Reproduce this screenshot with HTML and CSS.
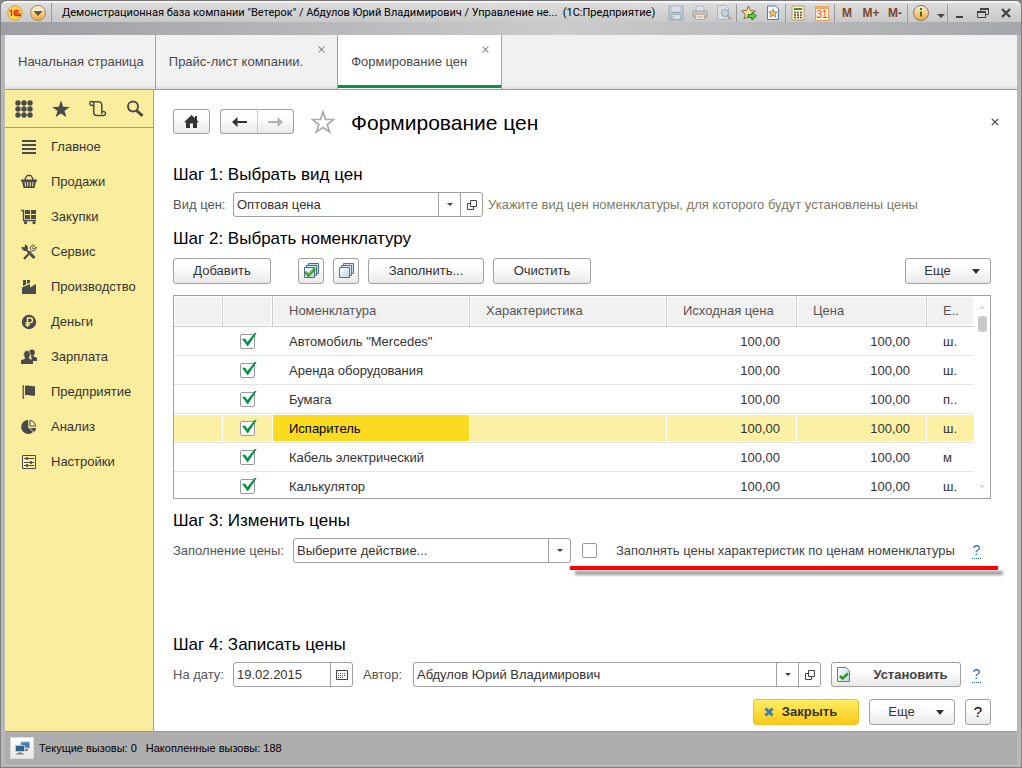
FILE: index.html
```html
<!DOCTYPE html>
<html lang="ru">
<head>
<meta charset="utf-8">
<title>Формирование цен</title>
<link rel="stylesheet" href="styles.css">
</head>
<body>
<svg class="defs" width="0" height="0" aria-hidden="true">
  <defs>
    <linearGradient id="gold" x1="0" y1="0" x2="0" y2="1"><stop offset="0" stop-color="#fff6d8"/><stop offset="1" stop-color="#f0a53a"/></linearGradient>
    <linearGradient id="sheet" x1="0" y1="0" x2="1" y2="1"><stop offset="0" stop-color="#fff"/><stop offset="1" stop-color="#bcd3e4"/></linearGradient>
    <symbol id="arrow-down" viewBox="0 0 8 5"><path d="M0 0h8L4 5z" fill="#333"/></symbol>
    <symbol id="arrow-small" viewBox="0 0 6 3"><path d="M0 0h6L3 3z" fill="#444"/></symbol>
    <symbol id="open" viewBox="0 0 10 10"><path d="M3.500 .5h6v6h-6zM3 3.500H.5v6h6V7" fill="none" stroke="#444"/></symbol>
    <symbol id="cross" viewBox="0 0 8 8"><path d="M.8 .8l6.400 6.400M7.200 .8L.8 7.200" fill="none" stroke="currentColor" stroke-width="1.200"/></symbol>
  </defs>
</svg>
<div class="window">
  <header class="titlebar">
    <div class="title-row">
      <button class="tb-btn logo-btn" aria-label="1С"><svg width="16" height="16" viewBox="0 0 16 16"><circle cx="8" cy="8" r="7.300" fill="#fbd843" stroke="#d59a58"/><path d="M2.500 6.500L4.500 5.300V11M12 6.300C10.500 4.700 7 5 7 8c0 2 1.500 2.600 3 2.600h4M11 7.700c-1-1-2.400-.6-2.400.4 0 .8.600 1 1.400 1h4" fill="none" stroke="#e02518" stroke-width="1.300"/></svg></button>
      <button class="tb-btn menu-btn" aria-label="Меню"><svg width="18" height="18" viewBox="0 0 18 18"><circle cx="9" cy="9" r="7.500" fill="url(#gold)" stroke="#a88a68"/><path d="M4.500 7h9L9 12z" fill="#6b5138"/><path d="M4.500 6.500h9" stroke="#fff"/></svg></button>
      <h1 class="title">Демонстрационная база компании "Ветерок" / Абдулов Юрий Владимирович / Управление не... &nbsp;(1С:Предприятие)</h1>
      <div class="tb-group first">
        <button class="tb-btn faded" aria-label="Сохранить"><svg width="16" height="16" viewBox="0 0 16 16"><path d="M1 1h14v14H1z" fill="#a6c6de" stroke="#6488a2"/><path d="M4 1.500h8v5H4z" fill="#dde9f1"/><path d="M3.500 9.500h9v5h-9z" fill="#eef3f6" stroke="#7293aa"/><path d="M5 11v3M3.500 7.500h9" stroke="#5d8099"/></svg></button>
        <button class="tb-btn faded" aria-label="Печать"><svg width="16" height="16" viewBox="0 0 16 16"><path d="M4 1h7l1 1v5H4z" fill="#e8edf2" stroke="#8d9aa5"/><path d="M1 6h14v6H1z" fill="#aeb6bd" stroke="#6e777e"/><path d="M3.500 9.500h9v5h-9z" fill="#fff" stroke="#b88464"/><path d="M5 12h6" stroke="#c88859"/></svg></button>
        <button class="tb-btn faded" aria-label="Просмотр"><svg width="16" height="16" viewBox="0 0 16 16"><path d="M1.500 .5h8l3 3v11h-11z" fill="#dfeaf3" stroke="#83a3bd"/><circle cx="9" cy="8" r="3.500" fill="#bcd6ea" stroke="#54789a"/><path d="M11.500 10.500l4 4" stroke="#b07a58" stroke-width="2"/></svg></button>
      </div>
      <div class="tb-group">
        <button class="tb-btn" aria-label="В избранное"><svg width="16" height="16" viewBox="0 0 16 16"><path d="M7.500 1l2 4.600 5 .4-3.900 3.200 1.300 4.800-4.400-2.600L3 14l1.400-4.800L.5 6l5-.4z" fill="#fbe1a0" stroke="#7d6a47"/><path d="M7 9.500h4V7l4.500 4L11 15v-2.500H7z" fill="#6fc837" stroke="#267b1a"/></svg></button>
        <button class="tb-btn" aria-label="Избранное"><svg width="14" height="16" viewBox="0 0 14 16"><path d="M1.500 1h8l3 3v10.500h-11z" fill="#f5fafd" stroke="#557fa2"/><path d="M7 4l1.200 2.800 3 .2L9 9l.7 3L7 10.400 4.300 12 5 9 2.800 7l3-.2z" fill="#f6c46a" stroke="#8d6a3b" stroke-width=".7"/></svg></button>
      </div>
      <div class="tb-group">
        <button class="tb-btn" aria-label="Калькулятор"><svg width="14" height="16" viewBox="0 0 14 16"><path d="M1 1h12v14H1z" fill="#fff4cf" stroke="#b7a06b"/><path d="M3 3h8v2H3z" fill="#43903b"/><path d="M3 7.500h8M3 10h8M3 12.500h8" stroke="#5b4a3a" stroke-width="1.500" stroke-dasharray="2 1"/></svg></button>
        <button class="tb-btn" aria-label="Календарь"><span class="cal">31</span></button>
      </div>
      <div class="tb-group">
        <button class="tb-btn mem">M</button><button class="tb-btn mem">M+</button><button class="tb-btn mem">M-</button>
      </div>
      <div class="tb-group">
        <button class="tb-btn info-btn" aria-label="О программе"><svg width="18" height="18" viewBox="0 0 18 18"><circle cx="9" cy="9" r="7.500" fill="url(#gold)" stroke="#8b7960"/><path d="M8 7.500h2v5H8zM8 4h2v2H8z" fill="#466d24"/></svg></button>
        <button class="tb-btn more-btn" aria-label="Ещё"><svg width="8" height="12" viewBox="0 0 8 12"><path d="M0 7h8l-4 4z" fill="#444"/></svg></button>
      </div>
      <div class="tb-group win">
        <button class="tb-btn" aria-label="Свернуть"><svg width="12" height="12" viewBox="0 0 12 12"><path d="M2 9h7v2H2z" fill="#444"/></svg></button>
        <button class="tb-btn" aria-label="Развернуть"><svg width="12" height="12" viewBox="0 0 12 12"><path d="M3.500 4V1.500h8v6H9M.5 5h8v5.500h-8z" fill="none" stroke="#444"/><path d="M3 2h9M0 5h9" stroke="#444" stroke-width="2"/></svg></button>
        <button class="tb-btn" aria-label="Закрыть окно"><svg width="12" height="12" viewBox="0 0 12 12"><path d="M2 2l8 8M10 2l-8 8" stroke="#444" stroke-width="2.400"/></svg></button>
      </div>
    </div>
  </header>

  <nav class="tabs" aria-label="Открытые окна">
    <a class="tab" href="#home">Начальная страница</a>
    <div class="tab closable"><a href="#price">Прайс-лист компании.</a><button class="tab-close" aria-label="Закрыть вкладку"><svg width="7" height="7"><use href="#cross"/></svg></button></div>
    <div class="tab closable active"><a href="#form">Формирование цен</a><button class="tab-close" aria-label="Закрыть вкладку"><svg width="7" height="7"><use href="#cross"/></svg></button></div>
  </nav>

  <div class="body">
    <aside class="sidebar">
      <div class="side-tools">
        <button aria-label="Функции"><svg width="18" height="18" viewBox="0 0 18 18" fill="#4a4a4a"><circle cx="3" cy="3" r="2.700"/><circle cx="9" cy="3" r="2.700"/><circle cx="15" cy="3" r="2.700"/><circle cx="3" cy="9" r="2.700"/><circle cx="9" cy="9" r="2.700"/><circle cx="15" cy="9" r="2.700"/><circle cx="3" cy="15" r="2.700"/><circle cx="9" cy="15" r="2.700"/><circle cx="15" cy="15" r="2.700"/></svg></button>
        <button aria-label="Избранное"><svg width="18" height="18" viewBox="0 0 18 18"><path d="M9 .5l2.200 6.200 6.500.2-5.200 4 1.900 6.300L9 13.500l-5.400 3.700 1.900-6.300-5.200-4 6.500-.2z" fill="#4a4a4a"/></svg></button>
        <button aria-label="История"><svg width="18" height="18" viewBox="0 0 18 18" fill="none" stroke="#4a4a4a" stroke-width="1.500"><path d="M3.500 5.500H2.800a2 2 0 1 1 1.900-2.500v9.500a3 3 0 0 0 3 3h6.800a2 2 0 1 0-1.700-3V5a3 3 0 0 0-3-3.200H3M4.500 5.300H3"/></svg></button>
        <button aria-label="Поиск"><svg width="18" height="18" viewBox="0 0 18 18" fill="none" stroke="#4a4a4a"><circle cx="7" cy="6.500" r="5" stroke-width="1.900"/><path d="M10.500 10.500l6 5.300" stroke-width="3"/></svg></button>
      </div>
      <ul class="menu">
        <li><a href="#main"><svg viewBox="0 0 16 16"><path d="M1 2h14M1 6h14M1 10h14M1 14h14" stroke="#4a4a4a" stroke-width="1.800"/></svg>Главное</a></li>
        <li><a href="#sales"><svg viewBox="0 0 16 16"><path d="M3 7l3-5.500M13 7l-3-5.500M6 1.500h4" fill="none" stroke="#4a4a4a" stroke-width="1.400"/><path d="M0 5.500h16v2h-1L13.500 14h-11L1 7.500H0z" fill="#4a4a4a"/><path d="M4 8l.5 4.500M6.700 8v4.500M9.300 8v4.500M12 8l-.5 4.500" stroke="#fbed9e"/></svg>Продажи</a></li>
        <li><a href="#buy"><svg viewBox="0 0 16 16"><path d="M0 1.500h2.500v10H15" fill="none" stroke="#4a4a4a" stroke-width="1.400"/><path d="M4 1h5v4H4zM10 1h5v4h-5zM4 6h5v4H4zM10 6h5v4h-5z" fill="#4a4a4a"/><circle cx="4.500" cy="13.700" r="1.600" fill="#4a4a4a"/><circle cx="13" cy="13.700" r="1.600" fill="#4a4a4a"/></svg>Закупки</a></li>
        <li><a href="#service"><svg viewBox="0 0 16 16" fill="none" stroke="#4a4a4a"><path d="M3 15l7-7.500" stroke-width="2.200"/><path d="M13.500 1.500l-2 2 .3 1.200 1.300.2 2-2c.5 2-1 4-3 4-2.200 0-3.500-2.500-2.300-4.500.7-1 2-1.700 3.700-.9z"/><path d="M1 3l2 1 1.500-1.500L4 .9C6 1 7 3 6.300 5L5 6.500C3 7 1 5.500 1 3z" fill="#4a4a4a"/><path d="M5.500 6l3 3" stroke-width="2"/><path d="M9.500 10l4 4" stroke-width="3"/></svg>Сервис</a></li>
        <li><a href="#production"><svg viewBox="0 0 16 16"><path d="M1 15V8.500L9 5v3.500l6-3.500v10zM2 1h3v4.500L2 7zM6 1h3v2.500L6 5z" fill="#4a4a4a"/></svg>Производство</a></li>
        <li><a href="#money"><svg viewBox="0 0 16 16"><circle cx="8" cy="8" r="7.200" fill="#4a4a4a"/><path d="M6.500 13V4h2.700a2.300 2.300 0 0 1 0 4.700H4.500M4.500 10.800H9" fill="none" stroke="#fbed9e" stroke-width="1.400"/></svg>Деньги</a></li>
        <li><a href="#salary"><svg viewBox="0 0 16 16" fill="#4a4a4a"><circle cx="11" cy="3.500" r="2.900"/><path d="M10 7l2-1 1 1.500 3 1.500v3h-5z"/><ellipse cx="6" cy="5.500" rx="3.300" ry="4" stroke="#fbed9e" stroke-width=".6"/><path d="M0 15v-3.500l4-2V8h4v1.500l4 2V15z"/></svg>Зарплата</a></li>
        <li><a href="#company"><svg viewBox="0 0 16 16"><path d="M2.200 1v14" stroke="#4a4a4a" stroke-width="1.200"/><path d="M4 2c3-1.500 5 1 10 0v9.500c-5 1-7-1.500-10 0z" fill="#4a4a4a"/></svg>Предприятие</a></li>
        <li><a href="#analysis"><svg viewBox="0 0 16 16"><path d="M7.300 1a7 7 0 1 0 4.800 12L7.300 8.500z" fill="#4a4a4a"/><path d="M9 9h6c0 1.500-.7 3-2 4z" fill="#4a4a4a"/><path d="M9 1.500c3 0 5.500 2.500 5.500 5.500H9z" fill="none" stroke="#4a4a4a"/></svg>Анализ</a></li>
        <li><a href="#settings"><svg viewBox="0 0 16 16" fill="none" stroke="#4a4a4a"><path d="M1.500 1.500h13v13h-13zM3 4.500h10M3 8.500h10M3 11.500h10"/><path d="M6 3v3M10 7v3M6 10v3" stroke-width="1.600"/></svg>Настройки</a></li>
      </ul>
    </aside>

    <main class="main">
      <div class="page-head">
        <button class="btn home-btn" aria-label="Домой"><svg width="15" height="13" viewBox="0 0 15 13"><path d="M7.500 0L11 3.300V1h2v4.200l2 2h-2V13H9V8.500H6V13H2V7.200H0z" fill="#333"/></svg></button>
        <div class="history">
          <button class="btn" aria-label="Назад"><svg width="15" height="10" viewBox="0 0 15 10"><path d="M1 5h14" stroke="#333" stroke-width="2"/><path d="M0 5l5.500-5v10z" fill="#333"/></svg></button>
          <button class="btn" aria-label="Вперед" disabled><svg width="15" height="10" viewBox="0 0 15 10"><path d="M0 5h14" stroke="#b0b0b0" stroke-width="2"/><path d="M15 5L9.500 0v10z" fill="#b0b0b0"/></svg></button>
        </div>
        <button class="plain star" aria-label="Добавить в избранное"><svg width="24" height="24" viewBox="0 0 24 24"><path d="M12 2l2.500 7.300 8.200.2-6.500 5 2.400 7.500L12 17.500 5.400 22l2.400-7.500-6.500-5 8.200-.2z" fill="#fff" stroke="#aaa" stroke-width="1.700"/></svg></button>
        <h2 class="page-title">Формирование цен</h2>
        <button class="plain page-close" aria-label="Закрыть"><svg width="8" height="8"><use href="#cross"/></svg></button>
      </div>

      <section class="step">
        <h3>Шаг 1: Выбрать вид цен</h3>
        <div class="row">
          <label class="lbl short" for="kind">Вид цен:</label>
          <div class="combo kind">
            <select id="kind"><option>Оптовая цена</option></select>
            <span class="cell"><svg width="6" height="3"><use href="#arrow-small"/></svg></span>
            <button class="cell" aria-label="Открыть вид цен"><svg width="10" height="10"><use href="#open"/></svg></button>
          </div>
          <p class="hint">Укажите вид цен номенклатуры, для которого будут установлены цены</p>
        </div>
      </section>

      <section class="step second">
        <h3>Шаг 2: Выбрать номенклатуру</h3>
        <div class="toolbar">
          <button class="btn add">Добавить</button>
          <button class="btn square" aria-label="Отметить все"><svg width="18" height="18" viewBox="0 0 18 18"><path d="M6.500 1.500h10v10h-10z" fill="#c9dceb" stroke="#3f6f91"/><path d="M4.500 3.500h10v10h-10z" fill="#d7e6f1" stroke="#3f6f91"/><path d="M2.500 5.500h10v10h-10z" fill="url(#sheet)" stroke="#3f6f91"/><path d="M3.500 10l3 3.500L13 6.500" fill="none" stroke="#38991d" stroke-width="2.800"/><path d="M4 9.500l2.500 3L12 6.500" fill="none" stroke="#79d144"/></svg></button>
          <button class="btn square" aria-label="Снять отметки"><svg width="18" height="18" viewBox="0 0 18 18"><path d="M6.500 1.500h10v10h-10z" fill="#c9dceb" stroke="#4f7791"/><path d="M4.500 3.500h10v10h-10z" fill="#d7e6f1" stroke="#4f7791"/><path d="M2.500 5.500h10v10h-10z" fill="url(#sheet)" stroke="#4f7791"/></svg></button>
          <button class="btn fill">Заполнить...</button>
          <button class="btn add">Очистить</button>
          <button class="btn more">Еще<svg width="8" height="5"><use href="#arrow-down"/></svg></button>
        </div>
        <div class="grid">
          <table>
            <colgroup><col class="c1"><col class="c2"><col><col><col class="c3"><col class="c3"><col class="c4"></colgroup>
            <thead><tr><th></th><th></th><th>Номенклатура</th><th>Характеристика</th><th>Исходная цена</th><th>Цена</th><th>Е..</th></tr></thead>
            <tbody>
              <tr><td></td><td class="tick"><input type="checkbox" checked aria-label="Автомобиль"></td><td>Автомобиль "Mercedes"</td><td></td><td class="num">100,00</td><td class="num">100,00</td><td>ш.</td></tr>
              <tr><td></td><td class="tick"><input type="checkbox" checked aria-label="Аренда"></td><td>Аренда оборудования</td><td></td><td class="num">100,00</td><td class="num">100,00</td><td>ш.</td></tr>
              <tr><td></td><td class="tick"><input type="checkbox" checked aria-label="Бумага"></td><td>Бумага</td><td></td><td class="num">100,00</td><td class="num">100,00</td><td>п..</td></tr>
              <tr class="selected"><td></td><td class="tick"><input type="checkbox" checked aria-label="Испаритель"></td><td class="current">Испаритель</td><td></td><td class="num">100,00</td><td class="num">100,00</td><td>ш.</td></tr>
              <tr><td></td><td class="tick"><input type="checkbox" checked aria-label="Кабель"></td><td>Кабель электрический</td><td></td><td class="num">100,00</td><td class="num">100,00</td><td>м</td></tr>
              <tr><td></td><td class="tick"><input type="checkbox" checked aria-label="Калькулятор"></td><td>Калькулятор</td><td></td><td class="num">100,00</td><td class="num">100,00</td><td>ш.</td></tr>
            </tbody>
          </table>
          <div class="scroll" aria-hidden="true">
            <svg width="6" height="4" viewBox="0 0 6 4"><path d="M0 4h6L3 0z" fill="#ddd"/></svg>
            <span class="thumb"></span>
            <svg class="down" width="6" height="4" viewBox="0 0 6 4"><path d="M0 0h6L3 4z" fill="#ddd"/></svg>
          </div>
        </div>
      </section>

      <section class="step third">
        <h3>Шаг 3: Изменить цены</h3>
        <div class="row">
          <label class="lbl long" for="action">Заполнение цены:</label>
          <div class="combo action">
            <select id="action"><option>Выберите действие...</option></select>
            <span class="cell"><svg width="6" height="3"><use href="#arrow-small"/></svg></span>
          </div>
          <div class="marked">
            <input type="checkbox" id="fillchars"><label for="fillchars">Заполнять цены характеристик по ценам номенклатуры</label>
            <a class="help" href="#help-fill">?</a>
          </div>
        </div>
      </section>

      <section class="step fourth">
        <h3>Шаг 4: Записать цены</h3>
        <div class="row">
          <label class="lbl short" for="date">На дату:</label>
          <div class="combo date">
            <input type="text" id="date" value="19.02.2015">
            <button class="cell" aria-label="Выбрать дату"><svg width="12" height="10" viewBox="0 0 12 10"><path d="M.5 .5h11v9H.5z" fill="none" stroke="#444"/><path d="M2 3.500h8M2 5.500h8M2 7.500h6" stroke="#555" stroke-dasharray="1 1"/></svg></button>
          </div>
          <label class="lbl author-lbl" for="author">Автор:</label>
          <div class="combo author">
            <select id="author"><option>Абдулов Юрий Владимирович</option></select>
            <span class="cell"><svg width="6" height="3"><use href="#arrow-small"/></svg></span>
            <button class="cell" aria-label="Открыть автора"><svg width="10" height="10"><use href="#open"/></svg></button>
          </div>
          <button class="btn apply"><svg width="13" height="15" viewBox="0 0 13 15"><path d="M.5 .5h8.500l3.500 3.500v10.500H.5z" fill="url(#sheet)" stroke="#557fa2"/><path d="M3 9l2.500 2.500L11 6.500" fill="none" stroke="#38991d" stroke-width="2.600"/></svg><span>Установить</span></button>
          <a class="help" href="#help-set">?</a>
        </div>
        <div class="footer">
          <button class="btn close"><svg width="10" height="10" viewBox="0 0 10 10"><path d="M1.500 1.500l7 7M8.500 1.500l-7 7" stroke="#3a80b0" stroke-width="3"/></svg>Закрыть</button>
          <button class="btn more">Еще<svg width="8" height="5"><use href="#arrow-down"/></svg></button>
          <button class="btn square q">?</button>
        </div>
      </section>
    </main>
  </div>

  <footer class="status">
    <button class="status-btn" aria-label="Вызовы сервера"><svg width="15" height="14" viewBox="0 0 15 14"><path d="M6 1h8.500v6H6z" fill="#477fa8" stroke="#9bb6c8"/><path d="M8 8h5v2H8z" fill="#888"/><path d="M.5 4.500h9v6h-9z" fill="#2f628b" stroke="#b8cad6"/><path d="M3 11.500h4v1H9v1H1v-1h2z" fill="#777"/></svg></button>
    <span>Текущие вызовы: 0</span><span>Накопленные вызовы: 188</span>
  </footer>
</div>
</body>
</html>
```
FILE: styles.css
```css
* { box-sizing: border-box; }
body { margin: 0; font: 13px/16px "Liberation Sans", Arial, sans-serif; color: #333; background: #8a8788; }
button, input, select { font: inherit; color: inherit; margin: 0; padding: 0; }
button { border: 0; background: none; display: flex; align-items: center; justify-content: center; }
h1, h2, h3, p, ul { margin: 0; padding: 0; font-weight: normal; }
a { color: inherit; text-decoration: none; }
svg { display: block; flex: none; }
.defs { position: absolute; }

.window { min-height: 100vh; display: flex; flex-direction: column; padding: 0 4px 3px; border: 1px solid #808080; border-top-color: #777; border-radius: 6px 6px 0 0; background: #b8b8b9; }

.titlebar { height: 34px; margin: 0 -4px; padding: 0 4px; border-radius: 6px 6px 0 0; border-top: 2px solid #f4f4f4; background: linear-gradient(to bottom, #dcdcdd, #c9c9ca 19px, transparent 19px), linear-gradient(to right, #9e9fa2, #cbcbcc 55%, #a6a7aa); }
.title-row { display: flex; align-items: center; height: 20px; }
.title { flex: 1; min-width: 0; padding-left: 10px; font-family: Roboto, "Liberation Sans", sans-serif; font-size: 11px; line-height: 20px; color: #000; white-space: nowrap; }
.tb-btn { width: 24px; height: 20px; }
.logo-btn { width: 20px; }
.menu-btn { width: 27px; border-right: 1px solid #999; }
.tb-group { display: flex; flex: none; height: 18px; align-items: center; border-left: 1px solid #999; }
.tb-group.first { border-left: 0; }
.tb-group .tb-btn { width: 24px; }
.tb-group .info-btn { width: 26px; }
.tb-group .more-btn { width: 13px; }
.win .tb-btn { width: 23px; }
.faded { opacity: .5; }
.mem { font-size: 12px; font-weight: bold; color: #7b4526; }
.cal { width: 14px; height: 15px; border: 1px solid #d8a064; border-top: 3px solid #eda95c; background: #fff5dd; color: #e23a1c; font-size: 10px; line-height: 12px; text-align: center; }

.tabs { display: flex; height: 55px; background: linear-gradient(to bottom, #f1f1f1 50px, #ddd); border-bottom: 1px solid #9c9c9c; font-size: 13px; color: #4a4a4a; }
.tab { position: relative; display: flex; align-items: center; padding: 0 11px 0 13px; border-right: 1px solid #a0a0a0; white-space: nowrap; }
.tab.closable { padding-right: 34px; }
.tab.active { background: #fff; box-shadow: inset 0 -1px #fff, inset 0 -4px #009646; }
.tab-close { position: absolute; right: 12px; top: 11px; color: #888; }

.body { flex: 1; display: flex; background: #fff; }
.sidebar { flex: none; width: 149px; background: #fbed9e; border-right: 1px solid #b9a82a; }
.side-tools { display: flex; gap: 19px; height: 38px; padding: 0 10px; align-items: center; border-bottom: 1px solid #b9a41c; }
.menu { list-style: none; padding-top: 1px; }
.menu a { display: flex; align-items: center; gap: 14px; height: 35px; padding-left: 16px; color: #333; }
.menu svg { width: 16px; height: 16px; }

.main { flex: 1; min-width: 0; padding: 18px 26px 6px 19px; display: flex; flex-direction: column; }
.btn { height: 26px; border: 1px solid #a0a0a0; border-radius: 3px; background: linear-gradient(to bottom, #fff 30%, #e9e9e9); color: #333; white-space: nowrap; }
.plain { padding: 0; }
.page-head { display: flex; align-items: center; height: 27px; margin-bottom: 30px; }
.page-head .btn { height: 25px; }
.home-btn { width: 37px; margin-right: 10px; }
.history { display: flex; margin-right: 17px; }
.history .btn { width: 37px; border-radius: 0 3px 3px 0; }
.history .btn:first-child { width: 38px; border-radius: 3px 0 0 3px; margin-right: -1px; border-right-color: #ccc; }
.history .btn:last-child { border-left-color: #ccc; }
.page-title { padding: 2px 0 0 16px; font-size: 21px; line-height: 26px; color: #000; }
.page-close { margin-left: auto; width: 8px; margin-right: -8px; color: #444; }

.step h3 { font-size: 17px; line-height: 20px; margin-bottom: 7px; color: #000; }
.step.second { margin-top: 12px; }
.step.second h3 { margin-bottom: 9px; }
.step.third { margin-top: 12px; }
.step.fourth { margin-top: auto; }
.row { display: flex; align-items: center; height: 25px; }
.lbl { flex: none; color: #555; white-space: nowrap; }
.lbl.short { width: 60px; }
.lbl.long { width: 120px; }
.hint { padding-left: 5px; color: #7c7a5f; white-space: nowrap; }
.combo { display: flex; height: 25px; border: 1px solid #a0a0a0; border-radius: 3px; background: #fff; }
.combo select, .combo input { flex: 1; min-width: 0; border: 0; padding: 0 3px; background: none; appearance: none; outline: 0; color: #333; }
.cell { flex: none; width: 22px; display: flex; align-items: center; justify-content: center; border-left: 1px solid #a0a0a0; }
.combo.kind { flex: none; width: 250px; }
.combo.action { flex: none; width: 278px; }
.combo.date { flex: none; width: 120px; }
.combo.author { flex: 1; }
.author-lbl { width: 60px; padding-left: 10px; }
.marked { position: relative; flex: 1; display: flex; align-items: center; height: 25px; padding-left: 11px; color: #444; white-space: nowrap; }
.marked label { padding-left: 19px; }
.marked::after { content: ""; position: absolute; left: -1px; right: -7px; top: 28px; height: 4px; background: #f00; box-shadow: 5px 5px 3px #999; }
.marked .help { margin-left: auto; }
.help { width: 9px; margin-right: 10px; font-size: 14px; text-align: center; color: #1a70b8; line-height: 16px; border-bottom: 1px dotted #1a70b8; }

input[type="checkbox"] { appearance: none; flex: none; width: 15px; height: 15px; border: 1px solid #999; border-radius: 2px; background: #fff; position: relative; display: block; }
input[type="checkbox"]:checked::after { content: ""; position: absolute; left: 1px; top: -2px; width: 15px; height: 14px; background: #009646; clip-path: polygon(0 45%, 22% 45%, 36% 68%, 87% 0, 100% 0, 38% 100%); }

.toolbar { display: flex; gap: 9px; margin-bottom: 11px; }
.add { width: 98px; }
.add + .square { margin-left: 18px; }
.square { width: 26px; }
.fill { width: 116px; }
.more { width: 86px; gap: 21px; padding-left: 8px; }
.toolbar .more { margin-left: auto; }

.grid { display: flex; height: 204px; border: 1px solid #a0a0a0; overflow: hidden; }
table { flex: 1; width: 0; border-collapse: separate; border-spacing: 0; table-layout: fixed; height: 205px; }
.c1 { width: 49px; }
.c2 { width: 50px; }
.c3 { width: 130px; }
.c4 { width: 47px; }
th { height: 31px; padding: 0 16px; text-align: left; font-weight: normal; color: #555; background: #f1f1f1; border-right: 1px solid #ccc; border-bottom: 1px solid #ccc; box-shadow: inset 0 0 0 1px #fff; white-space: nowrap; overflow: hidden; }
td { height: 29px; padding: 2px 16px 0; border-right: 1px solid #fff; border-bottom: 1px solid #e4e4e4; white-space: nowrap; overflow: hidden; }
th:last-child, td:last-child { border-right: 0; padding-right: 0; }
td.num { text-align: right; }
td.tick { padding: 0 0 0 17px; }
.selected td { background: #fcf0a4; box-shadow: inset 0 1px #fff, inset 0 -1px #fff; }
.selected td.current { background: #fbdb20; color: #000; }
.scroll { flex: none; width: 16px; display: flex; flex-direction: column; align-items: center; padding: 9px 0 9px; }
.thumb { width: 9px; height: 16px; margin-top: 7px; border-radius: 3px; background: #c8c8c8; }
.scroll .down { margin-top: auto; }

.apply { width: 130px; margin: 0 11px 0 10px; padding: 0 5px; font-weight: bold; height: 25px; color: #444; }
.apply span { flex: 1; padding-left: 16px; }
.fourth .help { margin-right: 10px; }
.footer { display: flex; justify-content: flex-end; gap: 10px; margin-top: 12px; }
.close { width: 106px; gap: 8px; padding-right: 11px; font-weight: bold; border-color: #f0c020; background: linear-gradient(to bottom, #fdee62, #fbc91a); }
.q { font-size: 15px; color: #000; }

.status { display: flex; align-items: center; gap: 9px; height: 33px; padding-left: 5px; border-top: 1px solid #999; background: #aeaeae; color: #000; font-size: 11px; }
.status-btn { width: 24px; height: 22px; border: 1px solid #ddd; background: linear-gradient(to bottom, #fff, #e8e8e8); margin-right: -4px; }
```
